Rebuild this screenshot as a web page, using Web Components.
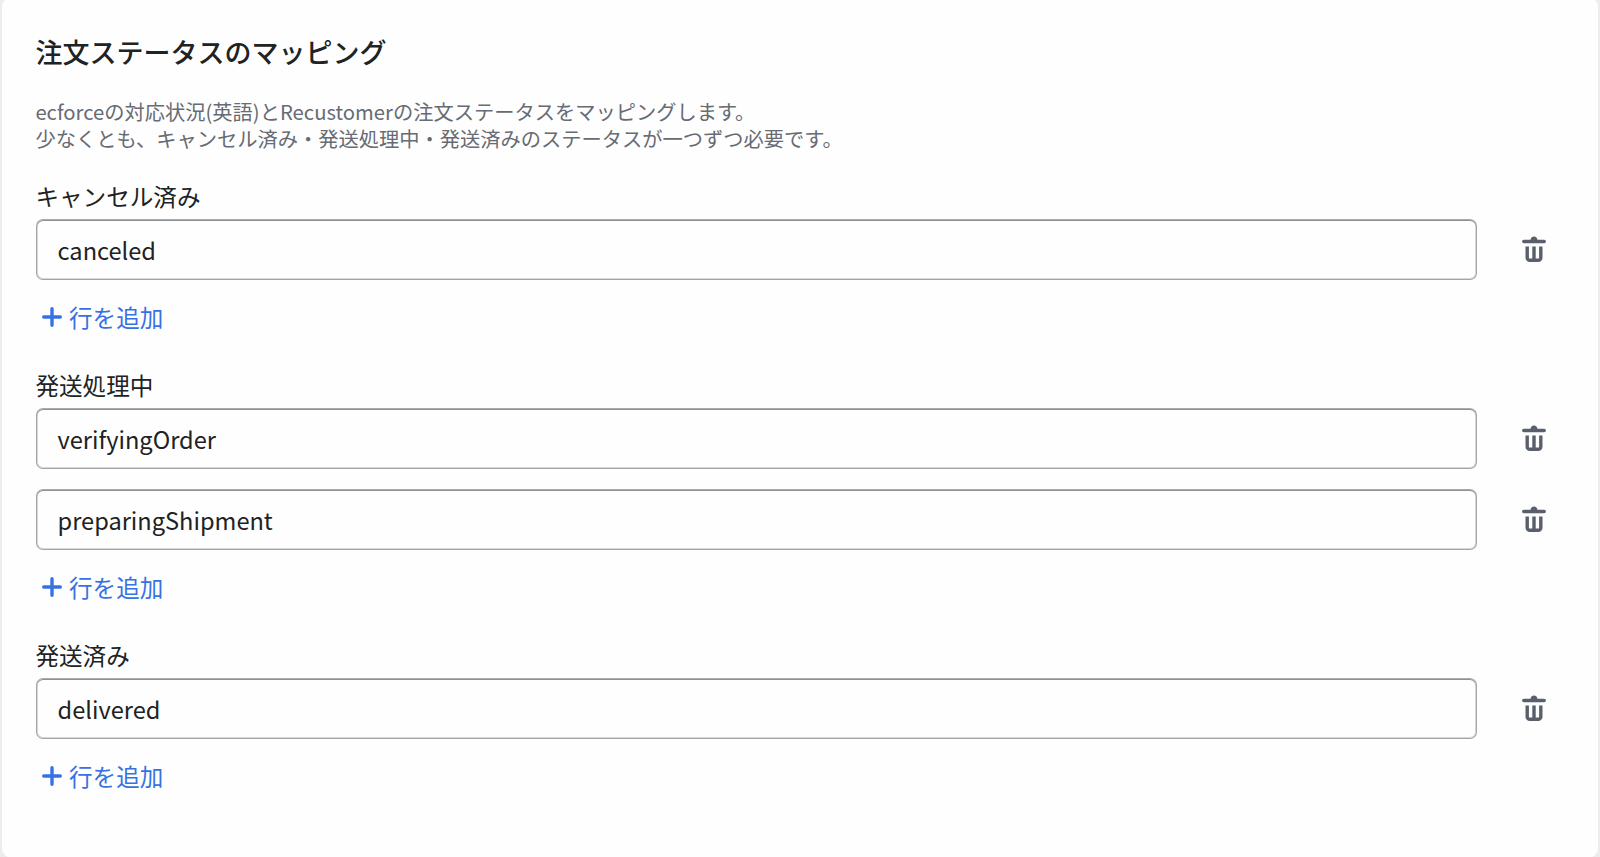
<!DOCTYPE html>
<html lang="ja">
<head>
<meta charset="utf-8">
<title>注文ステータスのマッピング</title>
<style>
html,body{margin:0;height:857px;overflow:hidden;background:#ededee}
body{font-family:"Noto Sans CJK JP","Noto Sans",sans-serif;color:#202223}
</style>
</head>
<body>
<mapping-card>
  <span slot="title">注文ステータスのマッピング</span>
  <span slot="description">ecforceの対応状況(英語)とRecustomerの注文ステータスをマッピングします。<br>少なくとも、キャンセル済み・発送処理中・発送済みのステータスが一つずつ必要です。</span>
  <status-group><span slot="label">キャンセル済み</span><status-row>canceled</status-row></status-group>
  <status-group><span slot="label">発送処理中</span><status-row>verifyingOrder</status-row><status-row>preparingShipment</status-row></status-group>
  <status-group><span slot="label">発送済み</span><status-row>delivered</status-row></status-group>
</mapping-card>
<script>
class Base extends HTMLElement{
  constructor(){super();this.attachShadow({mode:'open'}).innerHTML=this.constructor.markup;}
}
class MappingCard extends Base{
  static markup=`<style>
:host{display:block;box-sizing:border-box;height:861px;margin:-3px 2px 0;padding:36px 33.4px 0;background:#fefefe;border-radius:10px}
h2{margin:0;font-size:27px;line-height:38px;font-weight:500}
p{margin:27px 0 0;font-size:20.25px;line-height:27px;color:#676b73;white-space:nowrap}
.groups{display:flex;flex-direction:column;gap:34px;margin-top:27px}
</style><h2><slot name="title"></slot></h2><p><slot name="description"></slot></p><div class="groups"><slot></slot></div>`;
}
class StatusGroup extends Base{
  static markup=`<style>
:host{display:block}
.label{font-size:23.6px;line-height:34px;margin-bottom:6px}
.rows{display:flex;flex-direction:column;gap:20px}
</style><div class="label"><slot name="label"></slot></div><div class="rows"><slot></slot></div><add-row-button></add-row-button>`;
}
class StatusRow extends Base{
  static markup=`<style>
:host{display:flex;align-items:center;height:61px}
.field{box-sizing:border-box;width:1441px;height:61px;margin-left:.6px;padding:0 20.6px;border:1px solid #a2a5a8;border-top-color:#a9acae;border-radius:7px;box-shadow:inset 0 1px #8f9295,inset 0 0 0 1px #d6d8d9;font-size:23.6px;line-height:60px}
</style><div class="field"><slot></slot></div><trash-icon></trash-icon>`;
}
class TrashIcon extends Base{
  static markup=`<style>
:host{display:block;width:34px;height:34px;margin:1px 0 0 40.4px}
svg{display:block;fill:#5a5f6c}
</style><svg width="34" height="34" viewBox="0 0 20 20"><path d="M8 3.994c0-1.101.895-1.994 2-1.994s2 .893 2 1.994h4c.552 0 1 .446 1 .997a1 1 0 0 1-1 .997h-12c-.552 0-1-.447-1-.997s.448-.997 1-.997h4zm-3 10.514v-6.508h2v6.508a.5.5 0 0 0 .5.498h1.5v-7.006h2v7.006h1.5a.5.5 0 0 0 .5-.498v-6.508h2v6.508a2.496 2.496 0 0 1-2.5 2.492h-5c-1.38 0-2.5-1.116-2.5-2.492z"/></svg>`;
}
class AddRowButton extends Base{
  static markup=`<style>
:host{display:flex;align-items:center;height:34px;margin-top:20px;padding-left:6.6px;gap:7px;color:#3772e4;font-size:23.6px;line-height:34px}
svg{display:block;stroke:currentColor;stroke-width:3.4;stroke-linecap:round}
</style><svg width="20" height="20" viewBox="0 0 20 20"><path d="M1.7 10h16.6M10 1.7v16.6"/></svg><span>行を追加</span>`;
}
customElements.define('trash-icon',TrashIcon);
customElements.define('add-row-button',AddRowButton);
customElements.define('status-row',StatusRow);
customElements.define('status-group',StatusGroup);
customElements.define('mapping-card',MappingCard);
</script>
</body>
</html>
